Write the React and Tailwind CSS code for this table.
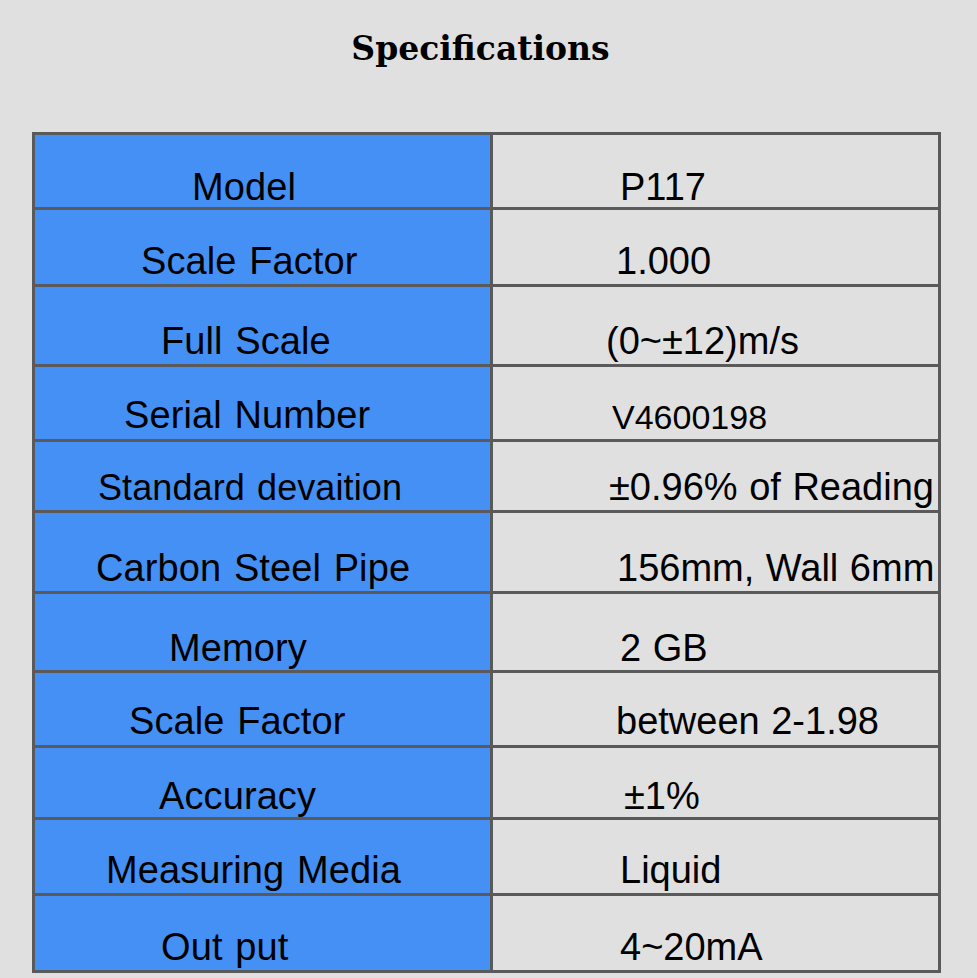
import React from "react";

const rows = [
  { label: "Model", value: "P117", h: 72, lx: 192, vx: 620, pb: 1 },
  { label: "Scale Factor", value: "1.000", h: 74, lx: 141, vx: 616, pb: 4 },
  { label: "Full Scale", value: "(0~±12)m/s", h: 77, lx: 161, vx: 606, pb: 4 },
  { label: "Serial Number", value: "V4600198", h: 72, lx: 124, vx: 612, pb: 5, vsize: "text-[34px]" },
  { label: "Standard devaition", value: "±0.96% of Reading", h: 68, lx: 98, vx: 609, pb: 4, lsize: "text-[36px]" },
  { label: "Carbon Steel Pipe", value: "156mm, Wall 6mm", h: 78, lx: 96, vx: 617, pb: 4 },
  { label: "Memory", value: "2 GB", h: 76, lx: 169, vx: 620, pb: 3 },
  { label: "Scale Factor", value: "between 2-1.98", h: 72, lx: 129, vx: 616, pb: 5 },
  { label: "Accuracy", value: "±1%", h: 69, lx: 159, vx: 624, pb: 2 },
  { label: "Measuring Media", value: "Liquid", h: 73, lx: 106, vx: 620, pb: 4 },
  { label: "Out put", value: "4~20mA", h: 74, lx: 161, vx: 620, pb: 4 },
];

const SpecRow = ({ row, last }) => {
  return (
    <div
      className={`flex ${last ? "" : "border-b-[3px] border-[#5a5a5a]"}`}
      style={{ height: row.h + (last ? 0 : 3) }}
    >
      {/* label cell */}
      <div
        className={`w-[455px] shrink-0 bg-[#4590f4] flex items-end ${row.lsize || "text-[38px]"} leading-none whitespace-nowrap tracking-[0.1px] [word-spacing:2px]`}
        style={{ paddingLeft: row.lx - 35, paddingBottom: row.pb }}
      >
        {row.label}
      </div>
      {/* value cell */}
      <div
        className={`flex-1 border-l-[3px] border-[#5a5a5a] flex items-end ${row.vsize || "text-[38px]"} leading-none whitespace-nowrap [word-spacing:1px]`}
        style={{ paddingLeft: row.vx - 493, paddingBottom: row.pb }}
      >
        {row.value}
      </div>
    </div>
  );
};

const App = () => {
  return (
    <div className="min-h-[978px] w-[977px] bg-[#e0e0e0] text-black font-['Liberation_Sans',Arial,sans-serif] overflow-hidden">
      <div className="pt-[32px] w-[909px] ml-[32px] text-center">
        <h1 className="font-['DejaVu_Serif',serif] font-bold text-[33px] leading-none pr-[12px]">
          Specifications
        </h1>
      </div>

      <div className="mt-[67px] ml-[32px] w-[909px] border-[3px] border-[#5a5a5a]">
        {rows.map((row, i) => (
          <SpecRow key={i} row={row} last={i === rows.length - 1} />
        ))}
      </div>
    </div>
  );
};

export default App;
